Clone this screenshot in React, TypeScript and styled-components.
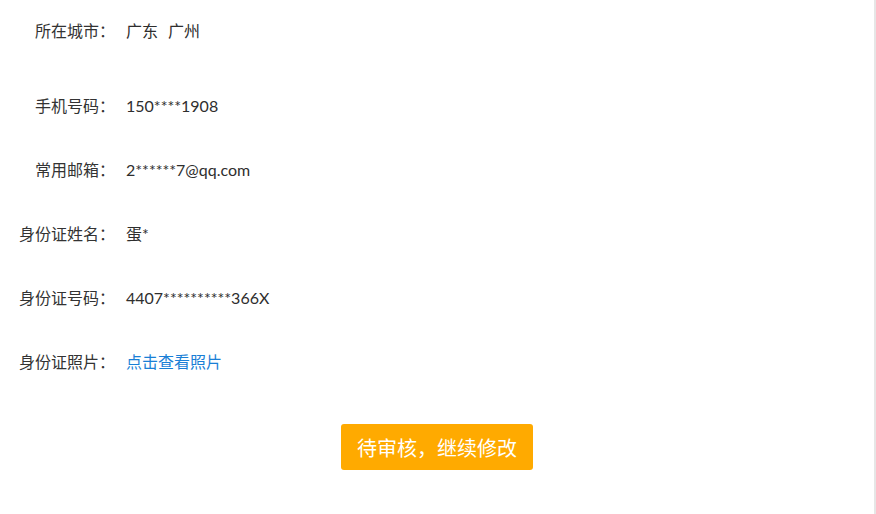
import React from 'react';
import styled, { createGlobalStyle } from 'styled-components';

const GlobalStyle = createGlobalStyle`
  html, body {
    margin: 0;
    padding: 0;
    background: #ffffff;
  }
  body {
    font-family: "Noto Sans CJK SC", "Liberation Sans", sans-serif;
    color: #333333;
  }
`;

const Page = styled.div`
  width: 874px;
  height: 514px;
  border-right: 2px solid #e6e6e6;
  overflow: hidden;
`;

const InfoList = styled.div`
  display: flex;
  flex-direction: column;
  padding-top: 10px;
`;

const Row = styled.div<{ $gap?: number }>`
  display: flex;
  align-items: center;
  height: 40px;
  margin-bottom: ${({ $gap }) => $gap ?? 24}px;
  font-size: 16px;
`;

const Label = styled.div`
  width: 115px;
  text-align: right;
  color: #333333;
  flex-shrink: 0;
`;

const Value = styled.div`
  margin-left: 11px;
  color: #2e2e2e;
  font-family: Lato, "Noto Sans CJK SC", sans-serif;
`;

const Place = styled.span`
  margin-right: 10px;
`;

const Link = styled.a`
  margin-left: 11px;
  color: #1a7fd6;
  text-decoration: none;
  cursor: pointer;
`;

const Actions = styled.div`
  display: flex;
  justify-content: center;
  margin-top: 19px;
`;

const SubmitButton = styled.button`
  width: 192px;
  height: 46px;
  border: none;
  border-radius: 3px;
  background: #ffaa00;
  color: #ffffff;
  font-size: 20px;
  font-family: "Noto Sans CJK SC", sans-serif;
  cursor: pointer;
  padding: 0;
`;

const rows = [
  { label: '手机号码：', value: '150****1908' },
  { label: '常用邮箱：', value: '2******7@qq.com' },
  { label: '身份证姓名：', value: '蛋*' },
  { label: '身份证号码：', value: '4407**********366X' },
];

export default function App() {
  return (
    <Page>
      <GlobalStyle />
      <InfoList>
        <Row $gap={35}>
          <Label>所在城市：</Label>
          <Value>
            <Place>广东</Place>
            <span>广州</span>
          </Value>
        </Row>
        {rows.map((r) => (
          <Row key={r.label}>
            <Label>{r.label}</Label>
            <Value>{r.value}</Value>
          </Row>
        ))}
        <Row>
          <Label>身份证照片：</Label>
          <Link>点击查看照片</Link>
        </Row>
      </InfoList>
      <Actions>
        <SubmitButton>待审核，继续修改</SubmitButton>
      </Actions>
    </Page>
  );
}
